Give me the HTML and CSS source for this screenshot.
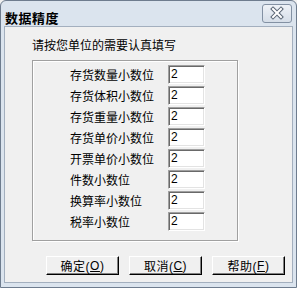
FILE: index.html
```html
<!DOCTYPE html>
<html lang="zh-CN">
<head>
    <meta charset="UTF-8">
    <title>数据精度</title>
    <link rel="stylesheet" href="styles.css">
</head>
<body>
    <div class="window">
        <div class="titlebar">
            <span class="title">数据精度</span>
            <span class="close">
                <svg width="28" height="17" viewBox="0 0 28 17">
                    <path d="M10 4 L18 12 M18 4 L10 12" stroke="#5a6675" stroke-width="4" stroke-linecap="square" fill="none"/>
                    <path d="M10 4 L18 12 M18 4 L10 12" stroke="#fff" stroke-width="2" stroke-linecap="square" fill="none"/>
                </svg>
            </span>
        </div>
        <div class="client">
            <div class="prompt">请按您单位的需要认真填写</div>
            <div class="group">
                <div class="row"><label>存货数量小数位</label><span class="field">2</span></div>
                <div class="row"><label>存货体积小数位</label><span class="field">2</span></div>
                <div class="row"><label>存货重量小数位</label><span class="field">2</span></div>
                <div class="row"><label>存货单价小数位</label><span class="field">2</span></div>
                <div class="row"><label>开票单价小数位</label><span class="field">2</span></div>
                <div class="row"><label>件数小数位</label><span class="field">2</span></div>
                <div class="row"><label>换算率小数位</label><span class="field">2</span></div>
                <div class="row"><label>税率小数位</label><span class="field">2</span></div>
            </div>
            <div class="buttons">
                <span class="btn">确定(<u>O</u>)</span>
                <span class="btn">取消(<u>C</u>)</span>
                <span class="btn">帮助(<u>F</u>)</span>
            </div>
        </div>
    </div>
</body>
</html>
```

FILE: styles.css
```css
* {
    margin: 0;
    padding: 0;
    box-sizing: border-box;
}

body {
    font-family: "Liberation Sans", "Noto Sans CJK SC", sans-serif;
    font-size: 12px;
    color: #000;
    background: #f0f0f0;
}

.window {
    width: 297px;
    height: 288px;
    display: flex;
    flex-direction: column;
    border: 1px solid #6e7c8e;
    border-radius: 6px 6px 0 0;
    background: #dbe4ee;
    padding: 0 3px 4px 3px;
}

.titlebar {
    height: 25px;
    display: flex;
    justify-content: space-between;
    padding-left: 1px;
}

.title {
    margin-top: 10px;
    font-size: 13px;
    line-height: 16px;
    font-weight: bold;
    letter-spacing: 0.5px;
}

.close {
    margin: 3px 1px 0 0;
    width: 30px;
    height: 19px;
    border: 1px solid #8391a3;
    border-radius: 3px;
    background: linear-gradient(#eef2f7, #d6dee8);
    display: flex;
    align-items: center;
    justify-content: center;
}

.client {
    flex: 1;
    background: #f0f0f0;
    border: 1px solid #a3afbe;
    padding-left: 27px;
}

.prompt {
    margin-top: 11px;
    line-height: 16px;
}

.group {
    margin-top: 6px;
    width: 206px;
    height: 181px;
    border: 1px solid #a0a0a0;
    box-shadow: 1px 1px 0 #fff, inset 1px 1px 0 #fff;
    padding: 4px 0 0 37px;
    display: flex;
    flex-direction: column;
    gap: 2px;
}

.row {
    display: flex;
    align-items: center;
    height: 19px;
}

.row label {
    width: 98px;
}

.field {
    width: 37px;
    height: 19px;
    background: #fff;
    border-top: 1px solid #a0a0a0;
    border-left: 1px solid #a0a0a0;
    border-right: 1px solid #fff;
    border-bottom: 1px solid #fff;
    box-shadow: inset 1px 1px 0 #696969, inset -1px -1px 0 #e3e3e3;
    padding-left: 2px;
    line-height: 17px;
}

.buttons {
    margin-top: 15px;
    padding-left: 14px;
    display: flex;
    gap: 10px;
}

.btn {
    width: 73px;
    height: 19px;
    display: flex;
    align-items: center;
    justify-content: center;
    background: #f0f0f0;
    border-top: 1px solid #fff;
    border-left: 1px solid #fff;
    border-right: 1px solid #000;
    border-bottom: 1px solid #000;
    box-shadow: inset -1px -1px 0 #808080;
    letter-spacing: 0.5px;
}
```
